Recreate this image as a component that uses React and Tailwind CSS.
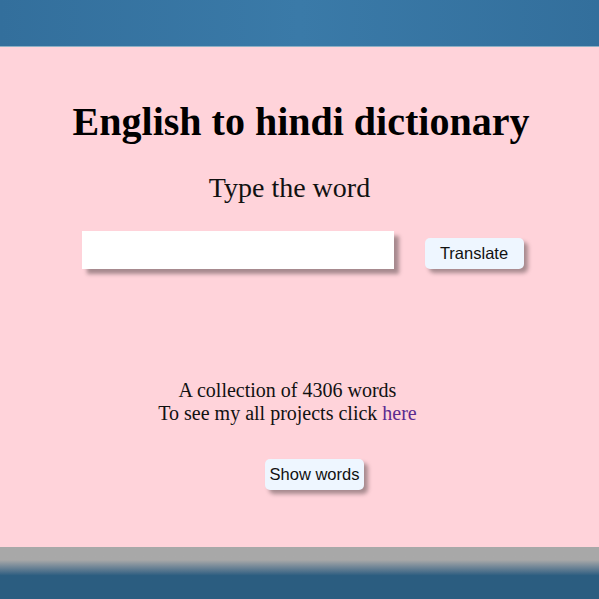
export default function App() {
  return (
    <div className="w-[599px] h-[599px] flex flex-col overflow-hidden font-['Liberation_Serif',serif]">
      <div className="h-[47px] shrink-0 bg-gradient-to-r from-[#336f9c] via-[#3a7aa8] to-[#336f9c] border-b border-[#8fb0c4]" />
      <main className="h-[500px] shrink-0 bg-[#ffd3da] flex flex-col items-center">
        <h1 className="mt-[55px] ml-[3px] text-[40px] leading-none font-bold text-black">English to hindi dictionary</h1>
        <p className="mt-[32px] mr-[20px] text-[28px] leading-none text-[#111]">Type the word</p>
        <div className="mt-[29px] flex items-start gap-[31px] ml-[6px]">
          <input
            type="text"
            className="w-[312px] h-[38px] bg-white outline-none shadow-[5px_5px_4px_rgba(0,0,0,0.35)]"
          />
          <button className="mt-[7px] w-[99px] h-[31px] rounded-[5px] bg-[#eef6ff] text-[16.5px] text-[#111] font-['Liberation_Sans',sans-serif] shadow-[4px_4px_4px_rgba(0,0,0,0.35)]">
            Translate
          </button>
        </div>
        <div className="mt-[110px] mr-[24px] text-center text-[20px] leading-[23px] text-[#111]">
          <p>A collection of 4306 words</p>
          <p>
            To see my all projects click <a href="#" className="text-[#5b2a90]">here</a>
          </p>
        </div>
        <button className="mt-[34px] ml-[30px] w-[99px] h-[31px] rounded-[5px] bg-[#eef6ff] text-[16.5px] text-[#111] font-['Liberation_Sans',sans-serif] shadow-[4px_4px_4px_rgba(0,0,0,0.35)]">
          Show words
        </button>
      </main>
      <div className="flex-1 bg-gradient-to-b from-[#a8a8a8] from-[25%] to-[#2b5d80] to-[55%]" />
    </div>
  )
}
